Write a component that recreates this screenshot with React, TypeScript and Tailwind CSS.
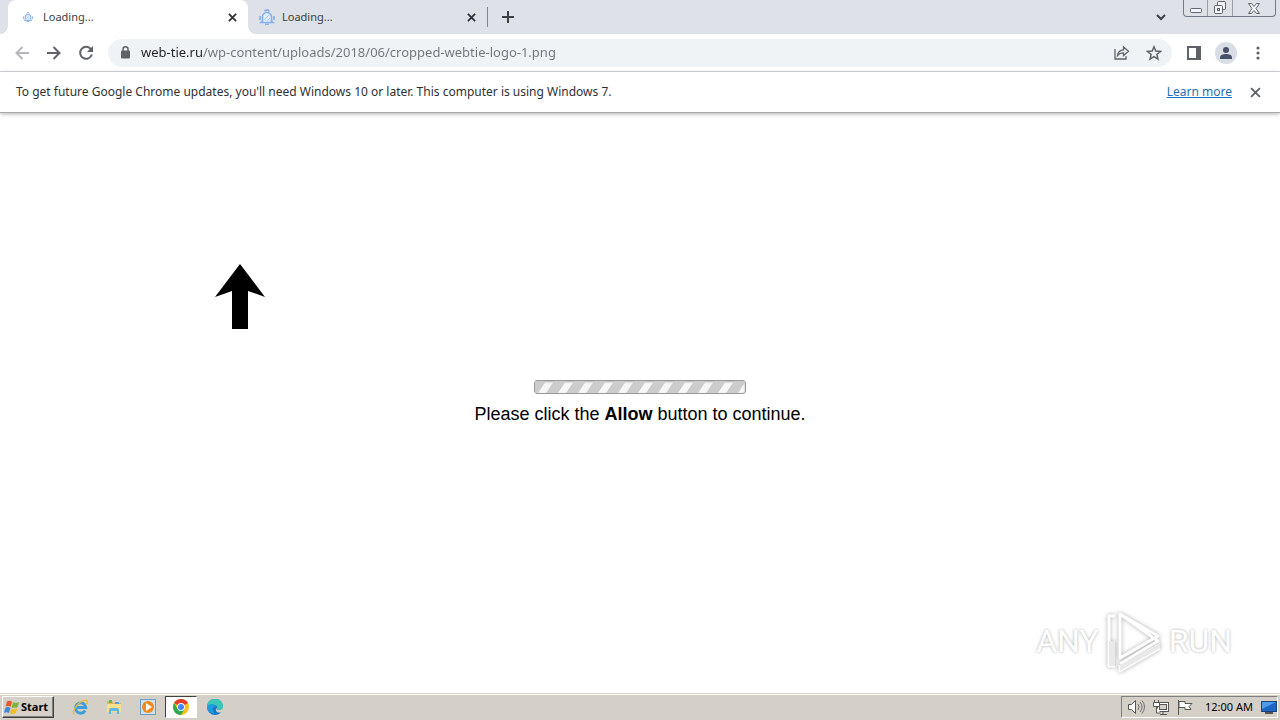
import type { ReactNode } from "react";

const uiFont = "font-['Noto_Sans','Liberation_Sans',sans-serif]";

function Cross({ size = 9, width = 2 }: { size?: number; width?: number }) {
  return (
    <svg width={size} height={size} viewBox="0 0 10 10" fill="none" stroke="currentColor" strokeWidth={width}>
      <path d="M1 1l8 8M9 1L1 9" />
    </svg>
  );
}

function Favicon({ size }: { size: number }) {
  return (
    <svg width={size} height={size} viewBox="0 0 16 16" fill="none">
      <path d="M3.500 12V8a4.500 4.500 0 0 1 9 0v4l1.500 1.500H2z" fill="#e3edfd" stroke="#86aef0" strokeWidth="1.600" />
      <path d="M5.500 2.200a3 3 0 0 1 5 0M6 15.200h4M1 7v4M15 7v4" stroke="#86aef0" strokeWidth="1.600" />
      <path d="M5 11l5-5M8 12l3-3" stroke="#a9c6f5" />
    </svg>
  );
}

function Tab({ active, icon }: { active?: boolean; icon: number }) {
  return (
    <div className={`relative flex items-center rounded-t-lg pr-2.5 ${active ? "w-60 bg-white pl-3" : "w-[239px] pl-[11px]"}`}>
      <button role="tab" aria-selected={!!active} className="flex flex-1 items-center gap-[7px] text-left">
        <span className="flex w-4 justify-center"><Favicon size={icon} /></span>
        <span className="text-[11px] text-[#3c4043]">Loading...</span>
      </button>
      <button aria-label="Close tab" className="flex size-3 items-center justify-center text-[#303134]"><Cross /></button>
      {active && (
        <svg className="absolute -right-2 bottom-0" width="8" height="8" viewBox="0 0 8 8"><path d="M0 0a8 8 0 0 0 8 8H0z" fill="#fff" /></svg>
      )}
      {active && (
        <svg className="absolute bottom-0 -left-2" width="8" height="8" viewBox="0 0 8 8"><path d="M8 0a8 8 0 0 1-8 8h8z" fill="#fff" /></svg>
      )}
    </div>
  );
}

function IconButton({ label, className = "", children }: { label: string; className?: string; children: ReactNode }) {
  return <button aria-label={label} className={`flex shrink-0 items-center justify-center ${className}`}>{children}</button>;
}

function TabStrip() {
  return (
    <header className="flex h-[34px] items-stretch bg-[#dee1e8] pl-2">
      <div role="tablist" className="flex">
        <Tab active icon={10} />
        <Tab icon={16} />
      </div>
      <div className="my-auto h-5 w-px bg-[#808690]" />
      <IconButton label="New tab" className="w-10 text-[#3c4043]">
        <svg width="12" height="12" viewBox="0 0 12 12" stroke="currentColor" strokeWidth="2"><path d="M6 0v12M0 6h12" /></svg>
      </IconButton>
      <IconButton label="Search tabs" className="ml-auto w-10 text-[#3c4043]">
        <svg width="10" height="7" viewBox="0 0 10 7" fill="none" stroke="currentColor" strokeWidth="2"><path d="M1 1l4 4 4-4" /></svg>
      </IconButton>
      <div className="mr-1 ml-0.5 flex h-[17px] rounded-b border border-t-0 border-[#737985] text-[#60656f]">
        <IconButton label="Minimize" className="w-6 border-r border-[#9a9fa9]">
          <svg width="12" height="12" viewBox="0 0 12 12" fill="#f4f5f8" stroke="currentColor"><rect x=".5" y="6.500" width="11" height="4" rx="1" /></svg>
        </IconButton>
        <IconButton label="Restore" className="w-[25px] border-r border-[#9a9fa9]">
          <svg width="14" height="14" viewBox="0 0 14 14" fill="#f4f5f8" stroke="currentColor"><rect x="4.500" y=".5" width="8" height="8" rx="1" /><rect x="1.500" y="4.500" width="8" height="8" rx="1" /><rect x="4.500" y="7.500" width="2" height="2" /></svg>
        </IconButton>
        <IconButton label="Close window" className="w-[42px]">
          <svg width="12" height="11" viewBox="0 0 12 11" fill="#f4f5f8" stroke="currentColor"><path d="M.5.5h3L6 3.500 8.500.5h3L8 5.500l3.500 5h-3L6 7.500l-2.500 3h-3l3.500-5z" /></svg>
        </IconButton>
      </div>
    </header>
  );
}

function Toolbar() {
  return (
    <nav className="flex h-[38px] items-center border-b border-[#d8dadd] bg-white px-1.5 text-[#5f6368]">
      <IconButton label="Back" className="size-8 text-[#b4b6b9]">
        <svg width="14" height="14" viewBox="0 0 14 14" fill="none" stroke="currentColor" strokeWidth="2"><path d="M14 7H2M7.500 1L1.500 7l6 6" /></svg>
      </IconButton>
      <IconButton label="Forward" className="size-8">
        <svg width="14" height="14" viewBox="0 0 14 14" fill="none" stroke="currentColor" strokeWidth="2"><path d="M0 7h12M6.500 1l6 6-6 6" /></svg>
      </IconButton>
      <IconButton label="Reload" className="size-8">
        <svg width="16" height="16" viewBox="0 0 16 16" fill="none" stroke="currentColor" strokeWidth="2"><path d="M13.200 4.500a6 6 0 1 0 .7 5" /><path d="M15 1v6H9z" fill="currentColor" stroke="none" /></svg>
      </IconButton>
      <div className="ml-1.5 flex h-7 flex-1 items-center rounded-full bg-[#f0f3f6] pr-0.5 pl-3">
        <svg width="11" height="13" viewBox="0 0 11 13" fill="none"><rect x="1" y="4.500" width="9" height="8" rx="1" fill="#5f6368" /><path d="M3 5V3.300a2.500 2.500 0 0 1 5 0V5" stroke="#5f6368" strokeWidth="1.500" /></svg>
        <input
          aria-label="Address"
          defaultValue="web-tie.ru/wp-content/uploads/2018/06/cropped-webtie-logo-1.png"
          className="ml-2.5 min-w-0 flex-1 bg-[linear-gradient(90deg,#202124_62px,#70757a_62px)] bg-clip-text text-[13px] text-transparent caret-black outline-none"
        />
        <IconButton label="Share" className="w-8">
          <svg width="16" height="15" viewBox="0 0 16 15" fill="none" stroke="currentColor" strokeWidth="1.300"><path d="M1 4v10h11v-3M3.500 10.500c.5-4 3-5.500 6-5.700V2l5 4.300-5 4.200V7.800c-2.500 0-4.500.7-6 2.700z" /></svg>
        </IconButton>
        <IconButton label="Bookmark" className="w-8">
          <svg width="16" height="16" viewBox="0 0 16 16" fill="none" stroke="currentColor" strokeWidth="1.500"><path d="M8 1.800l1.800 4.300 4.700.4-3.600 3 1.100 4.600L8 11.700l-4 2.400 1.100-4.600-3.600-3 4.700-.4z" /></svg>
        </IconButton>
      </div>
      <IconButton label="Side panel" className="ml-1.5 size-8">
        <svg width="14" height="14" viewBox="0 0 14 14" fill="none"><path d="M0 0h14v14H0zM2 2v10h7V2z" fill="currentColor" fillRule="evenodd" /></svg>
      </IconButton>
      <IconButton label="Profile" className="size-8">
        <svg width="22" height="22" viewBox="0 0 22 22"><circle cx="11" cy="11" r="11" fill="#d9dee5" /><circle cx="11" cy="8" r="3" fill="#47516a" /><path d="M5 17v-1.500c0-2.500 3-3.500 6-3.500s6 1 6 3.500V17z" fill="#47516a" /></svg>
      </IconButton>
      <IconButton label="Menu" className="size-8">
        <svg width="4" height="14" viewBox="0 0 4 14" fill="currentColor"><circle cx="2" cy="2" r="1.600" /><circle cx="2" cy="7" r="1.600" /><circle cx="2" cy="12" r="1.600" /></svg>
      </IconButton>
    </nav>
  );
}

function InfoBar() {
  return (
    <div className="relative z-10 flex h-[41px] items-center border-b border-[#a8a8a8] bg-white pr-[19px] pl-4 text-[12px] text-[#303134] shadow-[0_1px_4px_rgba(0,0,0,0.3)]">
      <p className="flex-1">To get future Google Chrome updates, you'll need Windows 10 or later. This computer is using Windows 7.</p>
      <a href="#learn" className="text-[#1a6fb8] underline">Learn more</a>
      <IconButton label="Dismiss" className="ml-[18px] text-[#5f6368]"><Cross size={11} width={1.700} /></IconButton>
    </div>
  );
}

function Watermark() {
  return (
    <div aria-hidden="true" className="absolute right-12 bottom-5 flex items-center gap-1.5 font-[Roboto,sans-serif] text-[32px] leading-[60px] text-white [text-shadow:0_0_3px_#aaa]">
      <span>ANY</span>
      <svg width="58" height="64" viewBox="0 0 58 64" fill="none" className="drop-shadow-[0_0_2px_#aaa]">
        <path d="M10 7H4v50h6M15 56v6l40-23M15 5v44l38-22zM15 5l38 27-38 23" stroke="#fff" strokeWidth="3" strokeLinejoin="round" />
        <path d="M4 32h6v25H4zM15 56v6l40-23v-6z" fill="#e9e9e9" />
      </svg>
      <span>RUN</span>
    </div>
  );
}

function Page() {
  return (
    <main className="relative flex flex-1 flex-col items-center justify-center gap-2 bg-white font-['Liberation_Sans',Arial,sans-serif]">
      <svg className="absolute top-[151px] left-[215px]" width="50" height="65" viewBox="0 0 50 65" aria-label="Up arrow">
        <path d="M25 0l25 33-17-6v38H17V27L0 33z" />
      </svg>
      <div role="progressbar" aria-label="Loading" className="h-3.5 w-[212px] rounded-[3px] border border-[#999] bg-[#f7f7f7] shadow-[inset_0_1px_2px_#aaa]">
        <svg width="100%" height="100%">
          <defs>
            <pattern id="stripes" width="20" height="12" patternUnits="userSpaceOnUse">
              <path d="M-9 12L-1 0h12L3 12zM11 12l8-12h12l-8 12z" fill="#ccc" />
            </pattern>
          </defs>
          <rect width="100%" height="100%" fill="url(#stripes)" />
        </svg>
      </div>
      <p className="text-lg leading-6 text-black">Please click the <b>Allow</b> button to continue.</p>
      <Watermark />
    </main>
  );
}

function WindowsFlag() {
  return (
    <svg width="16" height="15" viewBox="0 0 16 15">
      <path d="M3 1.500c2-1 3.500-.8 5 .2L6.700 6.800c-1.600-1-3.200-1-5-.2z" fill="#e8572a" />
      <path d="M9 2.200c2 1 3.700.8 6-.2l-1.400 5c-2 1-4 1.200-6 .2z" fill="#7db43c" />
      <path d="M1.400 7.700c2-.8 3.500-.8 5 .2L5 13c-1.500-1-3-1.100-5-.2z" fill="#3f8ad8" />
      <path d="M7.300 8.400c2 1 3.800.8 6-.2l-1.400 5c-2 1-4 1.100-6 .1z" fill="#f4bd28" />
    </svg>
  );
}

function Taskbar() {
  return (
    <footer className="flex h-[27px] items-center border-t border-[#d4d0c8] bg-[#d4d0c8] px-0.5 text-[11px] text-black shadow-[inset_0_1px_0_#fff]">
      <button className="flex h-[22px] w-[52px] items-center gap-px border border-t-white border-r-[#404040] border-b-[#404040] border-l-white pl-px text-[11px] font-bold shadow-[inset_-1px_-1px_0_#808080]">
        <WindowsFlag />Start
      </button>
      <div className="ml-[9px] flex items-center">
        <IconButton label="Internet Explorer" className="h-[22px] w-[34px]">
          <svg width="17" height="17" viewBox="0 0 17 17" fill="none"><path d="M13.200 11.500a5.200 5.200 0 1 1 .6-3H4.500" stroke="#3c9fdb" strokeWidth="2.800" /><path d="M2.500 15.500C-1 13.500 5 4 12 1.500c3.500-1 3.800 1 2.500 3.500" stroke="#e9b93d" strokeWidth="1.400" /></svg>
        </IconButton>
        <IconButton label="File Explorer" className="h-[22px] w-[34px]">
          <svg width="16" height="16" viewBox="0 0 16 16"><path d="M1 2h5l1 2h8v9H1z" fill="#dfb653" /><path d="M3 1h3v3H3z" fill="#69b66b" /><path d="M9 3h4v2H9z" fill="#5d9ed6" /><path d="M1 5h14v8H1z" fill="#f6e092" /><path d="M3 15v-4q0-2 2-2h6q2 0 2 2v4h-2v-3H5v3z" fill="#62b4e2" /></svg>
        </IconButton>
        <IconButton label="Media Player" className="h-[22px] w-[34px]">
          <svg width="16" height="16" viewBox="0 0 16 16"><rect x=".5" y=".5" width="15" height="15" fill="#cfe0ee" stroke="#6c9fc8" /><circle cx="8" cy="8" r="6" fill="#f28a1c" /><path d="M6 4l6 4-6 4z" fill="#fff" /></svg>
        </IconButton>
        <IconButton label="Google Chrome" className="h-[22px] w-8 border border-t-[#404040] border-r-white border-b-white border-l-[#404040] bg-white">
          <svg width="16" height="16" viewBox="0 0 16 16"><circle cx="8" cy="8" r="8" fill="#fbc116" /><path d="M8 8L1.100 4A8 8 0 0 1 14.900 4z" fill="#e33b2e" /><path d="M1.100 4A8 8 0 0 0 8 16l3.500-6L8 8 4.500 10z" fill="#2da94f" /><circle cx="8" cy="8" r="3.900" fill="#fff" /><circle cx="8" cy="8" r="3" fill="#4285f4" /></svg>
        </IconButton>
        <IconButton label="Microsoft Edge" className="h-[22px] w-9">
          <svg width="16" height="16" viewBox="0 0 16 16"><circle cx="8" cy="8" r="8" fill="#1478c9" /><path d="M0 8a8 8 0 0 1 16-1c.3 3-2 4-4.500 4-2 0-2-1-1.500-2C11 6 5 4 0 8z" fill="#3cc6b8" /><path d="M0 8c2-4 8-4 9 0-3-1-5 3-1 6-4 1-8-2-8-6z" fill="#1b9be0" /><path d="M16 8.500c-1 2-3 2.500-4.500 2.500-2 0-2-1-1.500-2-2 1-1 4 1.500 4.500 1.500.3 2.500 0 3.500-.5a8 8 0 0 0 1-4.500z" fill="#d4d0c8" /></svg>
        </IconButton>
      </div>
      <div className="ml-auto flex h-[22px] items-center gap-2 border border-t-[#808080] border-r-white border-b-white border-l-[#808080] pl-1.5 text-[#555]">
        <svg width="17" height="16" viewBox="0 0 17 16" fill="#fff" stroke="currentColor"><path d="M.5 5.500h3l4-4v13l-4-4h-3z" /><path d="M10 5q2 3 0 6M12 3q4 5 0 10M14 1.500q5 6.500 0 13" fill="none" strokeWidth=".8" /></svg>
        <svg width="16" height="16" viewBox="0 0 16 16" fill="#fff" stroke="currentColor"><rect x="4.500" y="3.500" width="11" height="9" /><rect x="6.500" y="5.500" width="7" height="5" fill="#d4d0c8" /><path d="M7 15.500h7M10 13v2M1.500 1v3M5.500 1v3M.5 3.500h6v4h-6zM3.500 8v6h4" /></svg>
        <svg width="16" height="16" viewBox="0 0 16 16" fill="#fff" stroke="currentColor"><path d="M1.500 1v15M2 2.500h6v2h7l-3 3 2 3H8v-2H2z" /></svg>
        <time className="ml-1 text-black">12:00 AM</time>
        <svg width="16" height="15" viewBox="0 0 16 15"><rect x=".5" y="1.500" width="15" height="10" fill="#1d66c4" stroke="#16437e" /><path d="M1 2h14L1 9z" fill="#4e9be8" /><path d="M4 12h8v2H4z" fill="#555" /></svg>
      </div>
    </footer>
  );
}

export default function App() {
  return (
    <div className={`flex min-h-screen flex-col bg-white ${uiFont}`}>
      <TabStrip />
      <Toolbar />
      <InfoBar />
      <Page />
      <Taskbar />
    </div>
  );
}
